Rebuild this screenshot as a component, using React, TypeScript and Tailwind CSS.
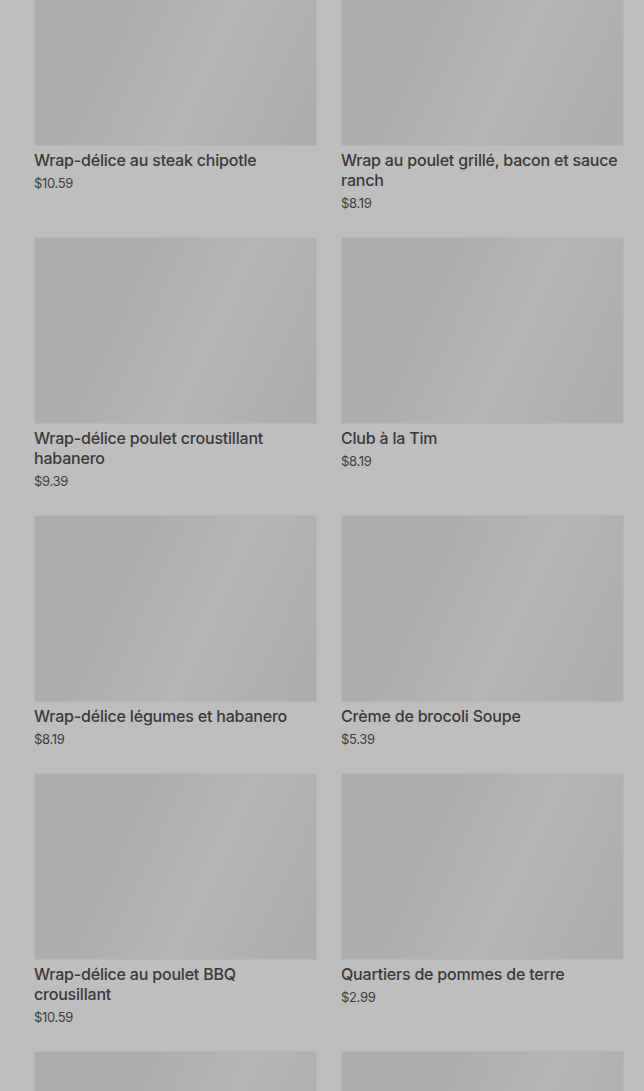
import React from 'react';

type Item = { name: string; price: string };

const items: Item[] = [
  { name: 'Wrap-délice au steak chipotle', price: '$10.59' },
  { name: 'Wrap au poulet grillé, bacon et sauce ranch', price: '$8.19' },
  { name: 'Wrap-délice poulet croustillant habanero', price: '$9.39' },
  { name: 'Club à la Tim', price: '$8.19' },
  { name: 'Wrap-délice légumes et habanero', price: '$8.19' },
  { name: 'Crème de brocoli Soupe', price: '$5.39' },
  { name: 'Wrap-délice au poulet BBQ crousillant', price: '$10.59' },
  { name: 'Quartiers de pommes de terre', price: '$2.99' },
];

const placeholder =
  'h-[187px] border border-[#b7b7b7] bg-linear-115 from-[#adadad] from-30% via-[#b6b6b6] via-60% to-[#adadad] to-95%';

const ProductCard: React.FC<{ item: Item }> = ({ item }) => (
  <div className="flex flex-col">
    <div className={placeholder} />
    <p className="mt-1 max-w-[280px] text-[16px] leading-5 font-medium tracking-[-0.2px] text-[#393939]">{item.name}</p>
    <p className="mt-1 text-[13px] leading-[18px] tracking-tight text-[#3d3d3d]">{item.price}</p>
  </div>
);

export default function App() {
  return (
    <div className="min-h-screen bg-[#bebebe] pl-[34px] pr-[20px] font-['Inter',sans-serif]">
      <div className="-mt-[41px] grid grid-cols-2 gap-x-6 gap-y-[25px]">
        {items.map((item) => (
          <ProductCard key={item.name} item={item} />
        ))}
        <div className={placeholder} />
        <div className={placeholder} />
      </div>
    </div>
  );
}
